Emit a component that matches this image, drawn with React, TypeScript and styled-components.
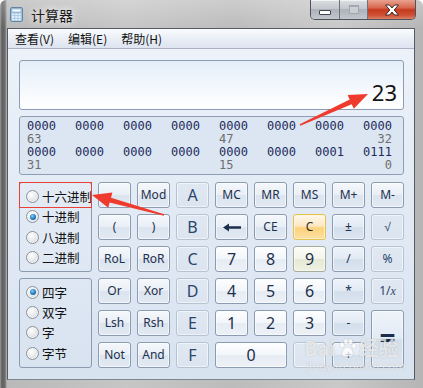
import React from "react";
import styled, { createGlobalStyle, css } from "styled-components";

type KeyKind = "func" | "digit" | "op" | "hot" | "warm" | "off";

type KeyDef = {
  label: React.ReactNode;
  kind: KeyKind;
  cols?: number;
  rows?: number;
  big?: boolean;
};

const GlobalStyle = createGlobalStyle`
  html, body {
    margin: 0;
    padding: 0;
    background: #ffffff;
  }
  body {
    width: 423px;
    height: 388px;
    overflow: hidden;
    font-family: "Noto Sans", "Noto Sans CJK SC", sans-serif;
  }
`;

const CJK = `"Noto Sans CJK SC", "Noto Sans", sans-serif`;

const BackArrow = () => (
  <svg width="18" height="9" viewBox="0 0 18 9">
    <path d="M0 4.5 L6 0.5 L6 3.2 L18 3.2 L18 5.8 L6 5.8 L6 8.5 Z" fill="#1d2f4d" />
  </svg>
);

const KEYS: KeyDef[] = [
  { label: "", kind: "func" },
  { label: "Mod", kind: "func" },
  { label: "A", kind: "off", big: true },
  { label: "MC", kind: "func" },
  { label: "MR", kind: "func" },
  { label: "MS", kind: "func" },
  { label: "M+", kind: "func" },
  { label: "M-", kind: "func" },

  { label: "(", kind: "func" },
  { label: ")", kind: "func" },
  { label: "B", kind: "off", big: true },
  { label: <BackArrow />, kind: "func" },
  { label: "CE", kind: "func" },
  { label: "C", kind: "hot" },
  { label: "±", kind: "op" },
  { label: "√", kind: "off" },

  { label: "RoL", kind: "func" },
  { label: "RoR", kind: "func" },
  { label: "C", kind: "off", big: true },
  { label: "7", kind: "digit", big: true },
  { label: "8", kind: "digit", big: true },
  { label: "9", kind: "warm", big: true },
  { label: "/", kind: "op" },
  { label: "%", kind: "off" },

  { label: "Or", kind: "func" },
  { label: "Xor", kind: "func" },
  { label: "D", kind: "off", big: true },
  { label: "4", kind: "digit", big: true },
  { label: "5", kind: "digit", big: true },
  { label: "6", kind: "digit", big: true },
  { label: "*", kind: "op" },
  { label: <span>1/<i style={{ fontFamily: '"Liberation Serif", serif' }}>x</i></span>, kind: "off" },

  { label: "Lsh", kind: "func" },
  { label: "Rsh", kind: "func" },
  { label: "E", kind: "off", big: true },
  { label: "1", kind: "digit", big: true },
  { label: "2", kind: "digit", big: true },
  { label: "3", kind: "digit", big: true },
  { label: "-", kind: "op" },
  { label: "=", kind: "op", rows: 2 },

  { label: "Not", kind: "func" },
  { label: "And", kind: "func" },
  { label: "F", kind: "off", big: true },
  { label: "0", kind: "digit", big: true, cols: 2 },
  { label: "", kind: "off" },
  { label: "+", kind: "op" },
];

const BASES = ["十六进制", "十进制", "八进制", "二进制"];
const WORDS = ["四字", "双字", "字", "字节"];

const BIT_ROWS = [
  { bits: ["0000", "0000", "0000", "0000", "0000", "0000", "0000", "0000"], marks: ["63", "47", "32"] },
  { bits: ["0000", "0000", "0000", "0000", "0000", "0000", "0001", "0111"], marks: ["31", "15", "0"] },
];

// arrow polygon from tail to tip
const arrowPoints = (
  x1: number, y1: number, x2: number, y2: number,
  headLen: number, headW: number, tailW: number, neckW: number,
) => {
  const len = Math.hypot(x2 - x1, y2 - y1);
  const dx = (x2 - x1) / len;
  const dy = (y2 - y1) / len;
  const nx = -dy;
  const ny = dx;
  const bx = x2 - dx * headLen;
  const by = y2 - dy * headLen;
  const p = (x: number, y: number, w: number, s: number) =>
    `${(x + nx * w * s / 2).toFixed(1)},${(y + ny * w * s / 2).toFixed(1)}`;
  return [
    p(x1, y1, tailW, 1),
    p(bx, by, neckW, 1),
    p(bx, by, headW, 1),
    `${x2},${y2}`,
    p(bx, by, headW, -1),
    p(bx, by, neckW, -1),
    p(x1, y1, tailW, -1),
  ].join(" ");
};

const App = () => {
  return (
    <>
      <GlobalStyle />
      <Window>
        <TitleBar>
          <AppIcon viewBox="0 0 13 15">
            <rect x="0.5" y="0.5" width="12" height="14" rx="1.5" fill="#9fc3df" stroke="#5f86a8" />
            <rect x="2" y="2" width="9" height="3" fill="#f4f9fd" stroke="#7a9bb8" strokeWidth="0.5" />
            {[0, 1, 2].map((r) =>
              [0, 1, 2].map((c) => (
                <rect key={`${r}-${c}`} x={2 + c * 3.2} y={6.5 + r * 2.6} width="2.3" height="1.8" fill="#e9f2f9" />
              )),
            )}
          </AppIcon>
          <TitleText>计算器</TitleText>
          <Controls>
            <CtrlButton $w={28}>
              <MinGlyph />
            </CtrlButton>
            <CtrlButton $w={27}>
              <MaxGlyph />
            </CtrlButton>
            <CloseButton>
              <svg width="16" height="12" viewBox="0 0 16 12">
                <path
                  d="M1.5 1 L5.5 1 L8 4 L10.5 1 L14.5 1 L10.2 6 L14.5 11 L10.5 11 L8 8 L5.5 11 L1.5 11 L5.8 6 Z"
                  fill="#ffffff"
                  stroke="#3c2a28"
                  strokeWidth="1"
                  strokeLinejoin="round"
                />
              </svg>
            </CloseButton>
          </Controls>
        </TitleBar>

        <Client>
          <MenuBar>
            <MenuItem>查看(V)</MenuItem>
            <MenuItem>编辑(E)</MenuItem>
            <MenuItem>帮助(H)</MenuItem>
          </MenuBar>

          <Body>
            <Display>
              <Value>23</Value>
            </Display>

            <BitPanel>
              {BIT_ROWS.map((row, i) => (
                <React.Fragment key={i}>
                  {row.bits.map((b, j) => (
                    <Bits key={j}>{b}</Bits>
                  ))}
                  <Mark>{row.marks[0]}</Mark>
                  <Mark />
                  <Mark />
                  <Mark />
                  <Mark>{row.marks[1]}</Mark>
                  <Mark />
                  <Mark />
                  <Mark $right>{row.marks[2]}</Mark>
                </React.Fragment>
              ))}
            </BitPanel>

            <Keypad>
              <RadioGroup $row={1}>
                <Marker />
                {BASES.map((b, i) => (
                  <RadioRow key={b}>
                    <Radio $checked={i === 1} />
                    {b}
                  </RadioRow>
                ))}
              </RadioGroup>
              <RadioGroup $row={4}>
                {WORDS.map((w, i) => (
                  <RadioRow key={w} $tight>
                    <Radio $checked={i === 0} />
                    {w}
                  </RadioRow>
                ))}
              </RadioGroup>
              {KEYS.map((k, i) => (
                <Key key={i} $kind={k.kind} $cols={k.cols ?? 1} $rows={k.rows ?? 1} $big={!!k.big} $eq={k.label === "="}>
                  {k.label}
                </Key>
              ))}
            </Keypad>
          </Body>
        </Client>

        <Watermark>
          <WmLogo>
            Bai
            <svg width="19" height="20" viewBox="0 0 19 20">
              <g fill="rgba(255,255,255,0.75)" stroke="rgba(120,120,120,0.3)" strokeWidth="0.6">
                <ellipse cx="4" cy="7" rx="2.4" ry="3" />
                <ellipse cx="8" cy="3.5" rx="2.3" ry="3" />
                <ellipse cx="12.5" cy="3.8" rx="2.3" ry="3" />
                <ellipse cx="16" cy="8" rx="2.2" ry="2.8" />
                <path d="M9.5 9 C13 9 16 14 15 17 C14 19.5 11 18.5 9.5 18.5 C8 18.5 5 19.5 4 17 C3 14 6 9 9.5 9 Z" />
              </g>
            </svg>
            经验
          </WmLogo>
          <WmUrl>jingyan.baidu.com</WmUrl>
        </Watermark>

        <Annotations viewBox="0 0 423 388">
          <polygon points={arrowPoints(300, 125, 368, 94, 19, 15, 1.5, 5)} fill="#ef3b2d" />
          <polygon points={arrowPoints(164, 215, 92, 195, 19, 16, 1.5, 5)} fill="#ef3b2d" />
        </Annotations>
      </Window>
    </>
  );
};

const Window = styled.div`
  position: relative;
  width: 423px;
  height: 388px;
  box-sizing: border-box;
  display: flex;
  flex-direction: column;
  padding: 0 8px 8px 7px;
  background:
    linear-gradient(180deg, rgba(255, 255, 255, 0.25) 0px, rgba(255, 255, 255, 0) 28px),
    linear-gradient(90deg, #9a9a9a 0px, #5f5f5f 2px, #6d6d6d 5px, #b9b9b9 7px, #c6c6c6 30%, #bcbcbc 55%, #c9c9c9 80%, #b5b5b5 100%);
  border-radius: 6px 6px 0 0;
  overflow: hidden;
`;

const TitleBar = styled.div`
  height: 28px;
  display: flex;
  align-items: flex-start;
`;

const AppIcon = styled.svg`
  width: 13px;
  height: 15px;
  margin: 7px 0 0 3px;
`;

const TitleText = styled.div`
  margin: 5px 0 0 8px;
  font-family: ${CJK};
  font-size: 14px;
  line-height: 20px;
  color: #1b1b1b;
  text-shadow: 0 0 6px rgba(255, 255, 255, 0.9), 0 0 10px rgba(255, 255, 255, 0.6);
`;

const Controls = styled.div`
  margin-left: auto;
  margin-right: -1px;
  display: flex;
  height: 19px;
  border: 1px solid #4c545f;
  border-top: none;
  border-radius: 0 0 5px 5px;
  overflow: hidden;
`;

const CtrlButton = styled.div<{ $w: number }>`
  width: ${(p) => p.$w}px;
  display: flex;
  align-items: center;
  justify-content: center;
  background: linear-gradient(180deg, #dcdee2 0%, #c4c7cc 45%, #aeb2b9 50%, #c3c6cb 100%);
  border-right: 1px solid #6b7380;
  box-shadow: inset 0 1px 0 rgba(255, 255, 255, 0.6);
`;

const MinGlyph = styled.div`
  width: 10px;
  height: 3px;
  margin-top: 5px;
  background: #ffffff;
  border: 1px solid #3f4650;
  border-radius: 1px;
`;

const MaxGlyph = styled.div`
  width: 8px;
  height: 6px;
  border: 1px solid #a0a5ad;
  border-top-width: 2px;
  background: #cdd0d4;
  opacity: 0.9;
`;

const CloseButton = styled.div`
  width: 47px;
  display: flex;
  align-items: center;
  justify-content: center;
  background: linear-gradient(180deg, #e8a290 0%, #d8684f 40%, #c63a1e 52%, #cf5034 80%, #dd8064 100%);
`;

const Client = styled.div`
  flex: 1;
  display: flex;
  flex-direction: column;
  border: 1px solid #555b63;
  border-bottom-color: #7d8590;
  background: linear-gradient(180deg, #eef3fa 0%, #e3ebf5 45%, #d8e3f0 100%);
`;

const MenuBar = styled.div`
  height: 19px;
  display: flex;
  align-items: center;
  padding-left: 7px;
  background: linear-gradient(180deg, #fbfcfe 0%, #eef2f8 35%, #dde4f0 100%);
  border-bottom: 1px solid #a9b3c4;
`;

const MenuItem = styled.span`
  font-family: ${CJK};
  font-size: 12px;
  line-height: 19px;
  color: #111;
  padding-right: 14px;
`;

const Body = styled.div`
  flex: 1;
  display: flex;
  flex-direction: column;
  padding: 11px 10px 0 11px;
`;

const Display = styled.div`
  height: 50px;
  box-sizing: border-box;
  display: flex;
  align-items: flex-end;
  justify-content: flex-end;
  padding: 0 6px 4px 0;
  border: 1px solid #8d9db3;
  border-radius: 3px;
  background: linear-gradient(180deg, #e4edf8 0%, #f1f6fc 45%, #ffffff 100%);
`;

const Value = styled.div`
  font-family: "Noto Sans", sans-serif;
  font-size: 22px;
  line-height: 26px;
  color: #141414;
`;

const BitPanel = styled.div`
  margin-top: 6px;
  height: 59px;
  box-sizing: border-box;
  padding: 3px 0 0 7px;
  border: 1px solid #8d9db3;
  border-radius: 3px;
  background: #dce6f2;
  display: grid;
  grid-template-columns: repeat(7, 48px) 29px;
  grid-auto-rows: 13px;
`;

const Bits = styled.span`
  font-family: "DejaVu Sans Mono", "Liberation Mono", monospace;
  font-size: 12px;
  line-height: 13px;
  color: #1c2c5c;
  white-space: nowrap;
`;

const Mark = styled.span<{ $right?: boolean }>`
  font-family: "DejaVu Sans Mono", "Liberation Mono", monospace;
  font-size: 12px;
  line-height: 13px;
  color: #6e6e6e;
  text-align: ${(p) => (p.$right ? "right" : "left")};
  white-space: nowrap;
`;

const Keypad = styled.div`
  margin-top: 7px;
  display: grid;
  grid-template-columns: 73px repeat(8, 33px);
  grid-template-rows: repeat(6, 26px);
  gap: 6px;
`;

const RadioGroup = styled.div<{ $row: number }>`
  position: relative;
  grid-column: 1;
  grid-row: ${(p) => p.$row} / span 3;
  box-sizing: border-box;
  padding: 3px 0 0 6px;
  border: 1px solid #8a9ab0;
  border-radius: 3px;
  display: flex;
  flex-direction: column;
`;

const Marker = styled.div`
  position: absolute;
  left: -1px;
  top: -1px;
  right: -1px;
  height: 24px;
  border: 1px solid #e8413a;
`;

const RadioRow = styled.div<{ $tight?: boolean }>`
  height: ${(p) => (p.$tight ? 20.3 : 20.5)}px;
  display: flex;
  align-items: center;
  gap: 3px;
  font-family: ${CJK};
  font-size: 12.5px;
  color: #111;
  white-space: nowrap;
`;

const Radio = styled.span<{ $checked: boolean }>`
  position: relative;
  width: 11px;
  height: 11px;
  flex: none;
  border-radius: 50%;
  border: 1px solid #8c9098;
  background: radial-gradient(circle at 40% 35%, #ffffff 0%, #e4e6e9 55%, #c8ccd2 100%);
  box-shadow: inset 0 0 0 1px rgba(255, 255, 255, 0.6);
  ${(p) =>
    p.$checked &&
    css`
      &::after {
        content: "";
        position: absolute;
        left: 2.5px;
        top: 2.5px;
        width: 6px;
        height: 6px;
        border-radius: 50%;
        background: radial-gradient(circle at 40% 35%, #8fd0f6 0%, #2b86c8 45%, #0c4f8a 100%);
      }
    `}
`;

const KIND_STYLES: Record<KeyKind, ReturnType<typeof css>> = {
  func: css`
    border-color: #8b9bb1;
    background: linear-gradient(180deg, #f5f8fb 0%, #e9eff6 48%, #dbe4ef 52%, #e3eaf3 100%);
    color: #1d2f4d;
  `,
  digit: css`
    border-color: #8b9bb1;
    background: linear-gradient(180deg, #fdfeff 0%, #f3f6fa 48%, #e6ecf3 52%, #eef2f7 100%);
    color: #1d2f4d;
  `,
  op: css`
    border-color: #8b9bb1;
    background: linear-gradient(180deg, #eff4fa 0%, #e2eaf4 48%, #d4dfec 52%, #dce5f0 100%);
    color: #1d2f4d;
  `,
  hot: css`
    border-color: #e6c24c;
    background: linear-gradient(180deg, #fff8ec 0%, #fde7c4 45%, #fcd27a 55%, #fde0a4 100%);
    color: #2a2a2a;
    box-shadow: inset 0 0 0 1px rgba(255, 245, 215, 0.8);
  `,
  warm: css`
    border-color: #a5ae98;
    background: linear-gradient(180deg, #fdfdf9 0%, #f3f4ea 48%, #e7e9d6 52%, #eef0e2 100%);
    color: #1d2f4d;
  `,
  off: css`
    border-color: #b6c3d3;
    background: linear-gradient(180deg, #e0e8f2 0%, #dbe4ef 100%);
    color: #2c456c;
  `,
};

const Key = styled.div<{ $kind: KeyKind; $cols: number; $rows: number; $big: boolean; $eq: boolean }>`
  grid-column: span ${(p) => p.$cols};
  grid-row: span ${(p) => p.$rows};
  box-sizing: border-box;
  display: flex;
  align-items: center;
  justify-content: center;
  border: 1px solid;
  border-radius: 3px;
  font-family: "Noto Sans", sans-serif;
  font-size: ${(p) => (p.$big ? 16 : 12)}px;
  font-weight: ${(p) => (p.$eq ? 700 : 400)};
  line-height: 1;
  box-shadow: inset 0 0 0 1px rgba(255, 255, 255, 0.55);
  ${(p) => KIND_STYLES[p.$kind]}
  ${(p) =>
    p.$eq &&
    css`
      font-size: 28px;
      color: #1b2d4a;
      padding-bottom: 4px;
    `}
`;

const Watermark = styled.div`
  position: absolute;
  left: 304px;
  top: 336px;
  display: flex;
  flex-direction: column;
  align-items: flex-start;
  pointer-events: none;
`;

const WmLogo = styled.div`
  display: flex;
  align-items: center;
  gap: 2px;
  font-family: ${CJK};
  font-size: 20px;
  font-weight: 700;
  line-height: 24px;
  color: rgba(255, 255, 255, 0.7);
  text-shadow: 0 0 1px rgba(90, 90, 90, 0.4);
`;

const WmUrl = styled.div`
  margin-top: -1px;
  padding-left: 2px;
  font-family: "Noto Sans", sans-serif;
  font-size: 11.5px;
  line-height: 14px;
  color: rgba(255, 255, 255, 0.7);
  text-shadow: 0 0 1px rgba(90, 90, 90, 0.35);
`;

const Annotations = styled.svg`
  position: absolute;
  left: 0;
  top: 0;
  width: 423px;
  height: 388px;
  pointer-events: none;
`;

export default App;
